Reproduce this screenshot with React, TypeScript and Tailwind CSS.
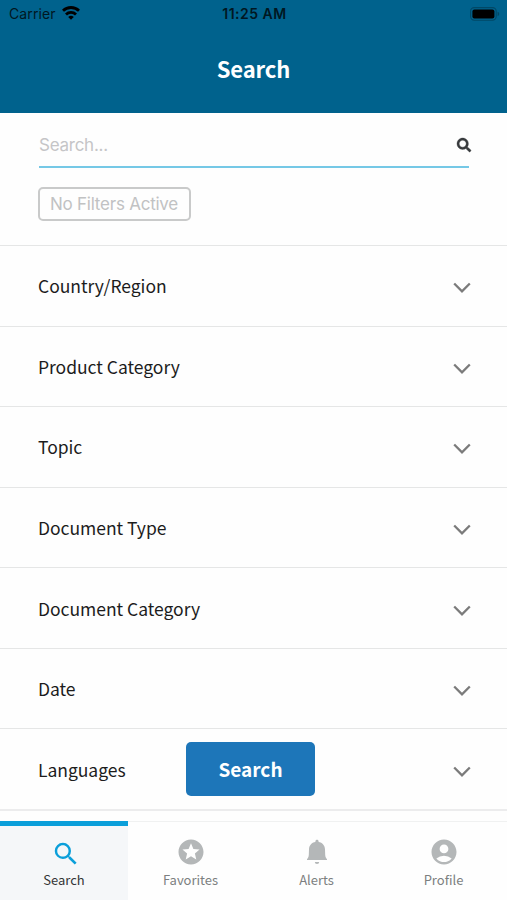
import React from "react";
import { FaSearch } from "react-icons/fa";
import { MdSearch, MdStars, MdAccountCircle } from "react-icons/md";

const filters = [
  "Country/Region",
  "Product Category",
  "Topic",
  "Document Type",
  "Document Category",
  "Date",
  "Languages",
];

function Bell() {
  return (
    <svg width="22" height="26" viewBox="0 0 22 26" fill="currentColor">
      <path d="M11 .8c-.9 0-1.600.7-1.600 1.500v.6C5.500 3.600 3.200 6.200 3 10.200l-.2 5.600c-.1 2-.7 3.400-1.800 4.400v.9h20v-.9c-1.100-1-1.700-2.400-1.800-4.400l-.2-5.600c-.2-4-2.500-6.600-6.400-7.300v-.6C12.600 1.500 11.900 .8 11 .8Z" />
      <path d="M8.800 23h4.400a2.200 1.900 0 0 1-4.400 0Z" />
    </svg>
  );
}

const tabs = [
  { label: "Search", icon: <MdSearch size={30} />, active: true },
  { label: "Favorites", icon: <MdStars size={30} />, active: false },
  { label: "Alerts", icon: <Bell />, active: false },
  { label: "Profile", icon: <MdAccountCircle size={30} />, active: false },
];

function StatusBar() {
  return (
    <div className="grid h-7 grid-cols-3 items-center pb-px pl-[9px] pr-[7px] font-['Inter',sans-serif] text-[14px] text-[#001722]">
      <div className="flex items-center gap-[7px]">
        <span className="tracking-[0.1px]">Carrier</span>
        <svg width="18" height="14" viewBox="0 0 18 14" fill="none" stroke="#000" strokeWidth="2.8" className="-ml-px -mt-0.5">
          <path d="M1 4.8a11.4 11.4 0 0 1 16 0" />
          <path d="M4 8.400a7.100 7.100 0 0 1 10 0" />
          <path d="M9 13.800 6.200 11a4 4 0 0 1 5.600 0Z" fill="#000" stroke="none" />
        </svg>
      </div>
      <span className="whitespace-nowrap text-center font-semibold tracking-[0.5px]">11:25 AM</span>
      <svg width="30" height="14" viewBox="0 0 30 14" className="justify-self-end">
        <rect x="0.6" y="0.6" width="25.6" height="12.6" rx="3.6" fill="none" stroke="#004866" strokeWidth="1.1" />
        <rect x="2.4" y="2.4" width="22" height="9" rx="2" fill="#000" />
        <path d="M27.6 4.8v4.4q1.7-.6 1.7-2.2t-1.7-2.2" fill="#004866" />
      </svg>
    </div>
  );
}

function Chevron() {
  return (
    <svg width="18" height="12" viewBox="0 0 18 12" fill="none" stroke="#7b7b7b" strokeWidth="2.3" className="mt-[5px]">
      <path d="M1.2 1.5 9 9.4l7.8-7.9" />
    </svg>
  );
}

export default function App() {
  return (
    <div className="relative flex h-[900px] w-[507px] flex-col overflow-hidden bg-[#fefefe] font-['Noto_Sans_CJK_SC',sans-serif]">
      <header className="h-[113px] shrink-0 bg-[#00628d]">
        <StatusBar />
        <h1 className="pt-[22px] text-center text-[22px] font-bold leading-9 tracking-[-0.1px] text-white">Search</h1>
      </header>

      <section className="h-[132px] shrink-0 px-[38px] font-['Inter',sans-serif]">
        <div className="ml-px flex h-[55px] items-center justify-between border-b-2 border-[#75c8e6] pt-[10px]">
          <span className="text-[17px] leading-6 tracking-[-0.25px] text-[#c5c5c7]">Search...</span>
          <FaSearch size={14} stroke="currentColor" strokeWidth={14} className="-mr-[2px] overflow-visible text-[#383b3d]" />
        </div>
        <div className="mt-[19px] flex h-[34px] w-[153px] items-center justify-center rounded-[5px] border-2 border-[#c9caca] pt-[2px] text-[17px] tracking-[-0.23px] text-[#c1c2c3]">
          <span className="-ml-px whitespace-nowrap">No Filters Active</span>
        </div>
      </section>

      <ul className="flex h-[566px] shrink-0 flex-col border-b-2 border-[#ececed]">
        {filters.map((name) => (
          <li key={name} className="flex flex-1 items-center justify-between border-t-[1.5px] border-[#e5e6e6] pl-[38px] pr-[36px]">
            <span className="mt-px text-[17.5px] leading-7 tracking-[-0.03px] text-[#1c1c1c]">{name}</span>
            <Chevron />
          </li>
        ))}
      </ul>

      <button className="absolute left-[186px] top-[742px] h-[54px] w-[129px] rounded-[5px] bg-[#1d76b9] text-[19px] font-bold text-white">
        Search
      </button>

      <nav className="mt-[10px] grid flex-1 grid-cols-[128px_125px_127px_127px]">
        {tabs.map((tab) => (
          <div
            key={tab.label}
            className={
              tab.active
                ? "flex flex-col items-center border-t-[5px] border-[#0b9fda] bg-[#f5f7f9] pt-[11px] text-[#333536]"
                : "flex flex-col items-center border-t border-[#f0f1f1] pt-[15px] text-[#7c7f80]"
            }
          >
            <span className={tab.active ? "flex h-[30px] items-center pl-[3px] pt-[3px] text-[#0b9fda]" : "flex h-[30px] items-center text-[#b4b7b8]"}>
              {tab.icon}
            </span>
            <span className="mt-[3px] text-[13px] leading-5">{tab.label}</span>
          </div>
        ))}
      </nav>
    </div>
  );
}
